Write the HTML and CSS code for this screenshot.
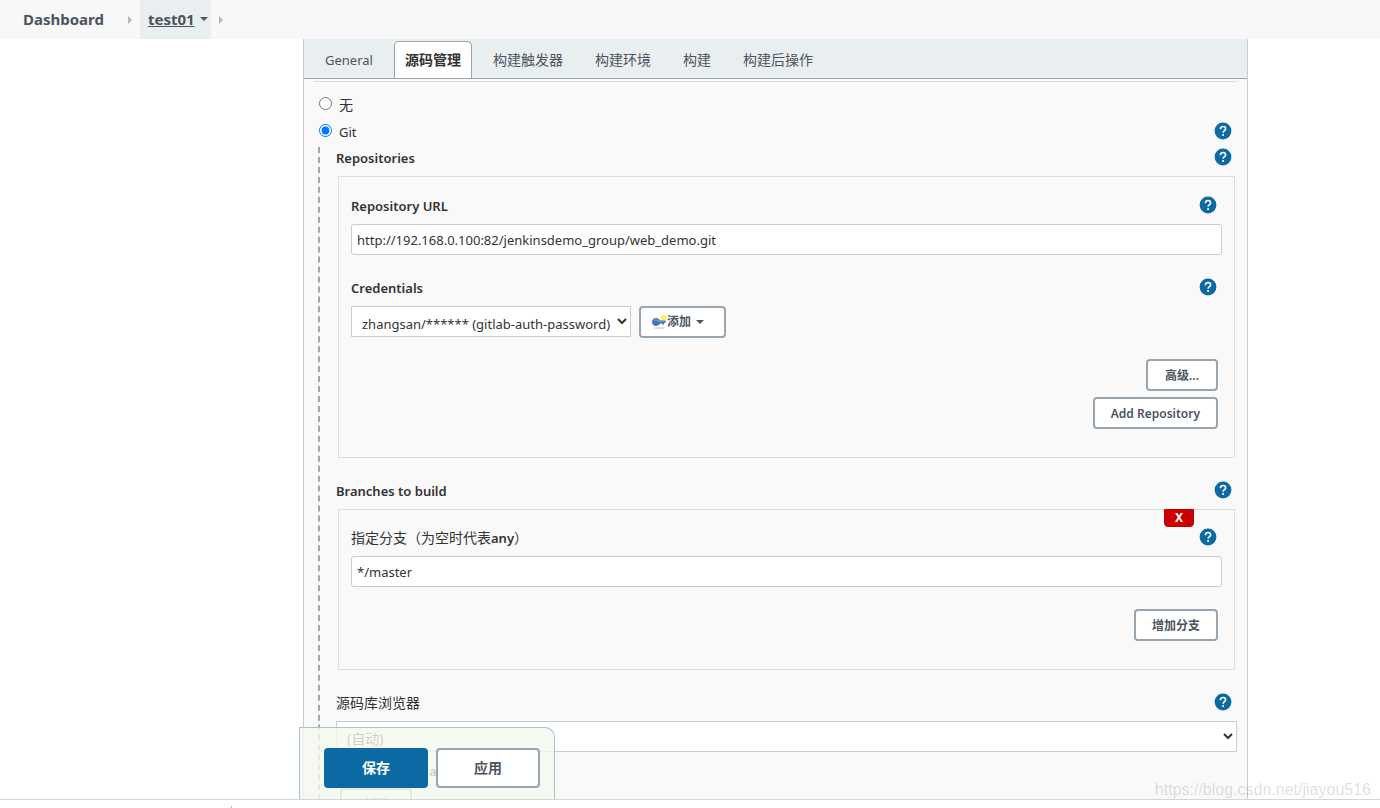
FILE: index.html
```html
<!DOCTYPE html>
<html lang="zh-CN">
<head>
<meta charset="utf-8">
<title>test01 Config [Jenkins]</title>
<link rel="stylesheet" href="styles.css">
</head>
<body>
<svg class="defs" aria-hidden="true">
  <symbol id="help" viewBox="0 0 18 18">
    <circle cx="9" cy="9" r="8.4" fill="#0b6aa2"/>
    <path d="M6.400 7.200C6.400 5.500 7.500 4.500 9 4.500s2.600 1 2.600 2.400c0 1.600-2.500 2-2.500 3.900" fill="none" stroke="#fff" stroke-width="1.600"/>
    <rect x="8.200" y="12.100" width="1.800" height="1.800" fill="#fff"/>
  </symbol>
</svg>
<nav class="breadcrumbs">
  <a class="crumb" href="#">Dashboard</a>
  <span class="sep"></span>
  <a class="crumb crumb-active" href="#"><span class="crumb-name">test01</span><span class="caret"></span></a>
  <span class="sep"></span>
</nav>
<main class="page">
  <form class="config">
    <div class="tabs">
      <a class="tab tab-latin" href="#">General</a>
      <a class="tab tab-active" href="#">源码管理</a>
      <a class="tab" href="#">构建触发器</a>
      <a class="tab" href="#">构建环境</a>
      <a class="tab" href="#">构建</a>
      <a class="tab" href="#">构建后操作</a>
    </div>
    <div class="body">
      <div class="choice"><input type="radio" name="scm" id="none"><label class="cjk" for="none">无</label></div>
      <div class="choice"><input type="radio" name="scm" id="git" checked><label for="git">Git</label><button type="button" class="help" aria-label="Help"><svg><use href="#help"/></svg></button></div>
      <div class="nested">
        <div class="row"><span class="name">Repositories</span><button type="button" class="help" aria-label="Help"><svg><use href="#help"/></svg></button></div>
        <section class="box box-repo">
          <div class="row"><label class="name" for="url">Repository URL</label><button type="button" class="help" aria-label="Help"><svg><use href="#help"/></svg></button></div>
          <input class="text" id="url" type="text" value="http://192.168.0.100:82/jenkinsdemo_group/web_demo.git">
          <div class="row row-next"><label class="name" for="cred">Credentials</label><button type="button" class="help" aria-label="Help"><svg><use href="#help"/></svg></button></div>
          <div class="cred">
            <select class="select select-cred" id="cred"><option>zhangsan/****** (gitlab-auth-password)</option></select>
            <button type="button" class="btn btn-add">
              <svg class="key" viewBox="0 0 16 16"><ellipse cx="8" cy="14" rx="6" ry="1" fill="#ddd"/><circle cx="12.500" cy="3.500" r="2.600" fill="#fff04a"/><path d="M5 4c2 0 3.400 1 4 2.500h5.500v2.500H13v1.500h-2V9.500H9C8.400 11 7 12 5 12c-2.400 0-4-1.700-4-4s1.600-4 4-4z" fill="#4277b5"/><path d="M3 6.500c1-1 3-1 4 .5h6" fill="none" stroke="#84aedc"/></svg><span>添加</span><span class="caret caret-btn"></span>
            </button>
          </div>
          <div class="actions">
            <button type="button" class="btn">高级...</button>
            <button type="button" class="btn">Add Repository</button>
          </div>
        </section>
        <div class="row row-section"><span class="name">Branches to build</span><button type="button" class="help" aria-label="Help"><svg><use href="#help"/></svg></button></div>
        <section class="box box-branch">
          <button type="button" class="delete" aria-label="Delete">X</button>
          <div class="row"><label class="name cjk" for="branch">指定分支（为空时代表<b>any</b>）</label><button type="button" class="help" aria-label="Help"><svg><use href="#help"/></svg></button></div>
          <input class="text" id="branch" type="text" value="*/master">
          <div class="actions"><button type="button" class="btn">增加分支</button></div>
        </section>
        <div class="row row-section"><label class="name cjk" for="browser">源码库浏览器</label><button type="button" class="help" aria-label="Help"><svg><use href="#help"/></svg></button></div>
        <select class="select select-wide cjk" id="browser"><option>(自动)</option></select>
        <div class="row row-extra"><span class="name">Additional Behaviours</span></div>
        <button type="button" class="btn btn-new">新增</button>
      </div>
    </div>
  </form>
  <div class="savebar">
    <button type="submit" class="big primary">保存</button>
    <button type="button" class="big">应用</button>
  </div>
  <div class="watermark">https://blog.csdn.net/jiayou516</div>
</main>
<footer class="strip"></footer>
</body>
</html>
```
FILE: styles.css
```css
* { box-sizing: border-box; }
body {
  margin: 0;
  height: 100vh;
  display: flex;
  flex-direction: column;
  overflow: hidden;
  background: #fff;
  color: #333;
  font: 13px/20px "Noto Sans", "Noto Sans CJK SC", sans-serif;
}
button, input, select { font: inherit; color: inherit; margin: 0; }
a { color: inherit; text-decoration: none; }
.defs { position: absolute; width: 0; height: 0; }

.breadcrumbs {
  flex: none;
  display: flex;
  align-items: center;
  height: 39px;
  padding-left: 23px;
  background: #f8f8f8;
  color: #4d545d;
  font-size: 15px;
  line-height: 18px;
  font-weight: 700;
}
.sep {
  border: 4px solid transparent;
  border-left-color: #b5b5b5;
  border-right: 0;
  margin: 0 8px;
}
.crumb { padding-bottom: 2px; }
.crumb + .sep { margin-left: 24px; }
.crumb-active + .sep { margin-left: 8px; }
.crumb-active {
  display: flex;
  align-items: center;
  gap: 5px;
  height: 39px;
  padding: 0 3px 2px 8px;
  background: #e9eef1;
}
.crumb-name { text-decoration: underline; }
.caret {
  border: 4px solid transparent;
  border-top-color: #4d545d;
  border-bottom: 0;
}

.page {
  position: relative;
  flex: 1;
  min-height: 0;
  overflow: hidden;
  padding: 0 132px 0 303px;
}
.config {
  min-height: 100%;
  background: #f9f9f9;
  border: solid #ccc;
  border-width: 0 1px;
}
.tabs {
  display: flex;
  align-items: flex-end;
  height: 40px;
  padding-left: 10px;
  background: #e9eef1;
  border-bottom: 1px solid #98a5ac;
  color: #4d545d;
}
.tab {
  height: 37px;
  padding: 9px 11px 0;
  margin-right: 10px;
  font-size: 14px;
}
.tab-latin { font-size: 13px; }
.tab-active {
  padding: 8px 10px 0;
  background: #fff;
  border: 1px solid #98a5ac;
  border-bottom: 0;
  border-radius: 5px 5px 0 0;
  color: #333;
  font-weight: 700;
}
.body {
  margin: 2px 10px 0;
  padding: 8px 0 0 5px;
  border-top: 1px solid #ddd;
}
.choice { display: flex; align-items: center; height: 27px; }
.choice input { width: 13px; height: 13px; margin-right: 7px; }
.choice label { padding-top: 2px; }
.cjk { font-size: 14px; }
.help {
  flex: none;
  width: 18px;
  height: 18px;
  margin-left: auto;
  padding: 0;
  border: 0;
  background: none;
}
.help svg { display: block; width: 18px; height: 18px; }
.choice .help, .nested > .row .help { margin-right: 5px; }
.nested {
  margin: 3px 0 0 -1px;
  padding-left: 16px;
  border-left: 2px dashed #a6a6a6;
  padding-bottom: 60px;
}
.row {
  display: flex;
  align-items: center;
  height: 20px;
}
.name { padding-top: 2px; font-weight: 600; }
.name.cjk { font-weight: 400; }
.name b { font-size: 13px; font-weight: 600; }
.box {
  position: relative;
  margin: 9px 2px 0;
  padding: 18px 12px 28px;
  border: 1px solid #ddd;
}
.box-branch { padding-top: 17px; }
.box .row .help { margin-right: 5px; }
.text {
  display: block;
  width: 100%;
  height: 31px;
  margin-top: 9px;
  padding: 1px 5px 0;
  background: #fff;
  border: 1px solid #ccc;
  border-radius: 3px;
}
.row-next { margin-top: 22px; }
.row-section { margin-top: 22px; }
.cred { display: flex; gap: 8px; margin-top: 9px; }
.select {
  height: 31px;
  padding: 4px 0 0 6px;
  background: #fff;
  border: 1px solid #ccc;
  border-radius: 0;
}
.select-cred { width: 280px; }
.select-wide { display: block; width: 100%; margin-top: 9px; }
.btn {
  min-width: 72px;
  height: 32px;
  padding: 2px 16px 0;
  background: #fff;
  border: 2px solid #98a5ae;
  border-radius: 4px;
  color: #4d545d;
  font-size: 12px;
  font-weight: 600;
}
.btn-add {
  display: flex;
  align-items: center;
  width: 87px;
  padding: 0 10px;
}
.key { width: 16px; height: 16px; }
.caret-btn { margin-left: 5px; }
.actions {
  display: flex;
  flex-direction: column;
  align-items: flex-end;
  gap: 6px;
  margin: 21px 4px 0;
}
.box-branch .actions { margin-top: 22px; }
.delete {
  position: absolute;
  top: -1px;
  right: 40px;
  width: 30px;
  height: 18px;
  padding: 0;
  background: #c00;
  border: 1px solid #b00;
  border-radius: 0 0 4px 4px;
  color: #fff;
  font-size: 12px;
  font-weight: 700;
  line-height: 16px;
}
.row-extra { margin-top: 8px; }
.btn-new { display: block; margin: 8px 0 0 4px; }

.savebar {
  position: absolute;
  left: 299px;
  bottom: 0;
  display: flex;
  gap: 8px;
  padding: 20px 14px 11px 24px;
  background: rgba(245, 249, 239, .8);
  border: 1px solid #a8c8b7;
  border-bottom: 0;
  border-radius: 0 10px 0 0;
}
.big {
  width: 104px;
  height: 40px;
  background: #fff;
  border: 2px solid #98a5ae;
  border-radius: 4px;
  color: #4d545d;
  font-size: 14px;
  font-weight: 700;
}
.primary { background: #0b6aa2; border-color: #0b6aa2; color: #fff; }
.watermark {
  position: absolute;
  right: 9px;
  bottom: 0;
  color: rgba(0, 0, 0, .14);
  font: 16px/18px "Liberation Sans", sans-serif;
}
.strip {
  flex: none;
  height: 9px;
  padding-left: 231px;
  border-top: 1px solid #d5d5d5;
}
.strip::before {
  content: "";
  display: block;
  width: 1px;
  height: 2px;
  margin-top: 6px;
  background: #bbb;
}
```
